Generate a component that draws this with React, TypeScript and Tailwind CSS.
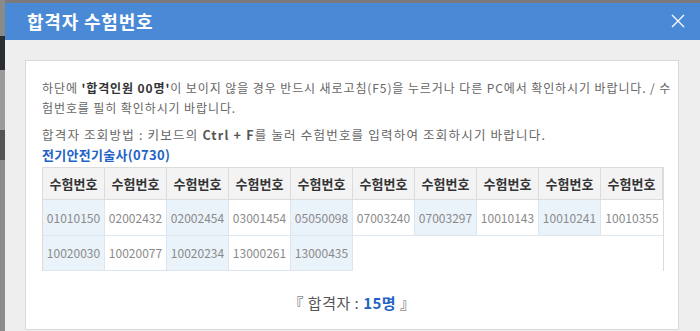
import React from "react";

const row1 = ["01010150","02002432","02002454","03001454","05050098","07003240","07003297","10010143","10010241","10010355"];
const row2 = ["10020030","10020077","10020234","13000261","13000435"];

export default function App() {
  const font = { fontFamily: '"Noto Sans CJK KR", "Noto Sans", sans-serif' };
  return (
    <div className="w-[700px] h-[331px] overflow-hidden bg-[#7a7a7a] flex" style={font}>
      <div className="w-[5px] flex flex-col shrink-0">
        <div className="h-[36px] bg-[#8a8a8a]" />
        <div className="h-[34px] bg-[#2a2d33]" />
        <div className="h-[60px] bg-[#9a9a9a]" />
        <div className="h-[30px] bg-[#555]" />
        <div className="flex-1 bg-[#8c8c8c]" />
      </div>
      <div className="flex-1 flex flex-col pt-[3px] min-w-0">
        <div className="h-[37px] bg-[#4a89d5] flex items-center justify-between pl-[22px] pr-[14px] shrink-0">
          <div className="text-white text-[18px] font-bold leading-none tracking-[0.8px] mb-[2px]">합격자 수험번호</div>
          <svg width="16" height="16" viewBox="0 0 16 16" className="mb-[2px]">
            <path d="M2 2 L14 14 M14 2 L2 14" stroke="#ffffff" strokeWidth="1.3" />
          </svg>
        </div>
        <div className="flex-1 bg-[#eeeeee] pl-[20px] pt-[20px]">
          <div className="w-[654px] h-[270px] bg-white border border-[#dadada] pl-[16px] pt-[17px]">
            <div className="text-[12px] leading-[20px] text-[#666] whitespace-nowrap tracking-[0.9px]">
              하단에 <b className="text-[#333]">'합격인원 00명'</b>이 보이지 않을 경우 반드시 새로고침(F5)을 누르거나 다른 PC에서 확인하시기 바랍니다. / 수
              <br />
              험번호를 필히 확인하시기 바랍니다.
            </div>
            <div className="mt-[7px] text-[12.5px] leading-[20px] text-[#666] whitespace-nowrap tracking-[1.2px]">
              합격자 조회방법 : 키보드의 <b className="text-[#555]">Ctrl + F</b>를 눌러 수험번호를 입력하여 조회하시기 바랍니다.
            </div>
            <div className="text-[13px] leading-[20px] font-bold text-[#1f63c6] whitespace-nowrap tracking-[0.3px]">전기안전기술사(0730)</div>
            <div className="mt-[2px] w-[622px] grid grid-cols-10 border-t border-l border-r border-[#dcdcdc]">
              {Array.from({ length: 10 }).map((_, i) => (
                <div key={"h" + i} className="h-[32px] bg-[#f3f3f3] border-r border-b border-[#dcdcdc] last:border-r-0 flex items-center justify-center text-[13px] font-bold text-[#333]">
                  수험번호
                </div>
              ))}
              {row1.map((n, i) => (
                <div key={"a" + i} className={(i % 2 === 0 ? "bg-[#eaf2fa] " : "bg-white ") + (i === 9 ? "" : "border-r ") + "h-[36px] border-b border-[#dde5ee] flex items-center justify-center text-[12px] text-[#8a8a8a]"}>
                  {n}
                </div>
              ))}
              {Array.from({ length: 10 }).map((_, i) => {
                const n = row2[i];
                if (!n) return <div key={"b" + i} className="h-[35px] bg-white" />;
                return (
                  <div key={"b" + i} className={(i % 2 === 0 ? "bg-[#eaf2fa] " : "bg-white ") + "h-[35px] border-r border-b border-[#dde5ee] flex items-center justify-center text-[12px] text-[#8a8a8a]"}>
                    {n}
                  </div>
                );
              })}
            </div>
            <div className="mt-[22px] pr-[16px] text-center text-[15px] leading-[20px] text-[#555] tracking-[0.5px]">
              『 합격자 : <b className="text-[#1f63c6]">15명</b> 』
            </div>
          </div>
        </div>
      </div>
    </div>
  );
}
